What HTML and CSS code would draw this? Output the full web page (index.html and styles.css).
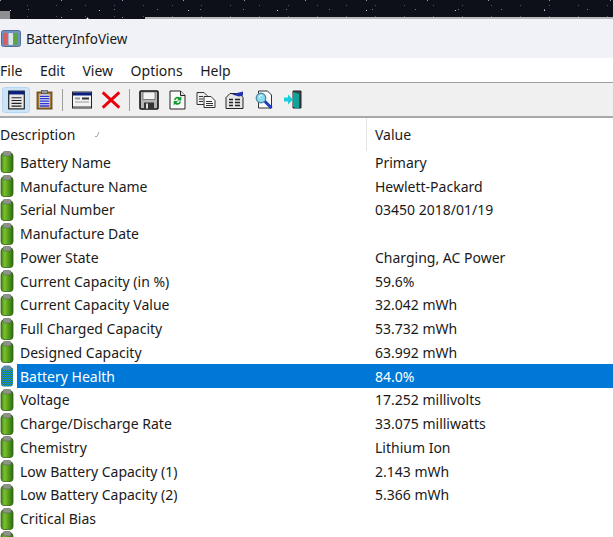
FILE: index.html
```html
<!DOCTYPE html>
<html lang="en">
<head>
  <meta charset="UTF-8">
  <title>BatteryInfoView</title>
  <link rel="stylesheet" href="styles.css">
</head>
<body>
  <svg class="defs" width="0" height="0">
    <defs>
      <linearGradient id="green" x1="0" x2="1" y1="0" y2="0">
        <stop offset="0" stop-color="#3f8214"/>
        <stop offset="0.3" stop-color="#7cc02e"/>
        <stop offset="0.65" stop-color="#4f9a1a"/>
        <stop offset="1" stop-color="#2f6a0e"/>
      </linearGradient>
      <pattern id="dither" width="2" height="2" patternUnits="userSpaceOnUse">
        <rect width="2" height="2" fill="#3f9a5a"/>
        <rect width="1" height="1" fill="#0078d7"/>
        <rect x="1" y="1" width="1" height="1" fill="#0078d7"/>
      </pattern>
      <symbol id="battery" viewBox="0 0 14 22">
        <rect x="1" y="2" width="12" height="19.5" rx="3" fill="url(#green)" stroke="#35601a" stroke-width="0.8"/>
        <rect x="3" y="0.5" width="8" height="4.5" rx="1.5" fill="#8c9488" stroke="#5a6456" stroke-width="0.6"/>
      </symbol>
      <symbol id="battery-sel" viewBox="0 0 14 22">
        <rect x="1" y="2" width="12" height="19.5" rx="3" fill="url(#dither)"/>
        <rect x="3" y="0.5" width="8" height="4.5" rx="1.5" fill="#5f8ca8"/>
      </symbol>
    </defs>
  </svg>

  <div class="wallpaper">
    <div class="taskbar-corner"></div>
    <div class="window-edge"></div>
  </div>

  <div class="title-bar">
    <svg class="app-icon" viewBox="0 0 20 18">
      <rect x="0.5" y="0.5" width="19" height="16" rx="2" fill="#6f93c4" stroke="#55708f"/>
      <rect x="2" y="3" width="4.5" height="12" rx="1" fill="#d9605a"/>
      <rect x="7.5" y="3" width="4.5" height="12" rx="1" fill="#dfe3e8"/>
      <rect x="12.5" y="3" width="4.5" height="12" rx="1" fill="#5aa646"/>
    </svg>
    <span>BatteryInfoView</span>
  </div>

  <div class="menu-bar">
    <span>File</span>
    <span>Edit</span>
    <span>View</span>
    <span>Options</span>
    <span>Help</span>
  </div>

  <div class="toolbar">
    <button class="tool active">
      <svg viewBox="0 0 16 18"><rect x="1" y="1" width="14" height="16" fill="#e8e8e8" stroke="#111"/><rect x="1" y="1" width="14" height="3" fill="#0a1f80"/><path d="M3.5 7h9M3.5 9.5h9M3.5 12h9M3.5 14.5h9" stroke="#222"/></svg>
    </button>
    <button class="tool">
      <svg viewBox="0 0 16 19"><rect x="1" y="2" width="14" height="16" fill="#a5772e" stroke="#5b3d12"/><rect x="3" y="4" width="10" height="12.5" fill="#d8dcf5"/><rect x="5" y="0.5" width="6" height="3" fill="#9a9a9a" stroke="#444" stroke-width="0.6"/><path d="M3.5 6h9M3.5 8.3h9M3.5 10.6h9M3.5 12.9h9M3.5 15.2h9" stroke="#2a35c8" stroke-width="1.2"/></svg>
    </button>
    <i class="tool-sep"></i>
    <button class="tool wide">
      <svg viewBox="0 0 20 17"><rect x="0.5" y="0.5" width="19" height="16" fill="#f3f3f3" stroke="#222"/><rect x="1" y="1" width="18" height="3" fill="#0a1f80"/><rect x="3" y="6" width="5" height="2" fill="#999"/><rect x="10" y="6" width="7" height="2" fill="#333"/><path d="M3 10.5h14" stroke="#999"/><path d="M1 15.5h18" stroke="#777" stroke-width="1.5"/></svg>
    </button>
    <button class="tool wide">
      <svg viewBox="0 0 18 17"><path d="M2.5 2.5 15.5 14.5M15.5 2.5 2.5 14.5" stroke="#e8000b" stroke-width="2.6" stroke-linecap="square"/></svg>
    </button>
    <i class="tool-sep"></i>
    <button class="tool wide">
      <svg viewBox="0 0 20 20"><rect x="1" y="1" width="18" height="18" rx="1" fill="#b4b4b4" stroke="#111" stroke-width="1.6"/><rect x="4" y="2" width="12" height="7.5" fill="#f2f2f2" stroke="#444" stroke-width="0.6"/><rect x="5" y="12.5" width="10" height="6.5" fill="#333"/><rect x="7" y="13.5" width="2" height="5" fill="#ddd"/></svg>
    </button>
    <button class="tool">
      <svg viewBox="0 0 17 20"><path d="M1 1h10.5l4.5 4.5V19H1z" fill="#fafafa" stroke="#222"/><path d="M11.5 1v4.5H16" fill="#ddd" stroke="#222"/><path d="M5 10a3.6 3.6 0 0 1 6-2.4L12.3 6v4.6H8l1.5-1.5A2 2 0 0 0 6.5 10z" fill="#119a2d"/><path d="M12 11.5a3.6 3.6 0 0 1-6 2.4L4.7 15.4v-4.5H9l-1.5 1.5a2 2 0 0 0 3 -1z" fill="#119a2d"/></svg>
    </button>
    <button class="tool wide">
      <svg viewBox="0 0 20 17"><path d="M1 1h7l3 3v9H1z" fill="#efefef" stroke="#333"/><path d="M8 5h7l4 4v7H8z" fill="#f7f7f7" stroke="#333"/><path d="M3 5h4M3 7.5h4M3 10h4M10 10h6M10 12h7M10 14h7" stroke="#333"/></svg>
    </button>
    <button class="tool wide">
      <svg viewBox="0 0 20 19"><path d="M1 7 5 3h10l3 4v11H1z" fill="#e6e6e6" stroke="#222"/><path d="M7 4 14 2l4-1v4l-4 1z" fill="#2533a8"/><path d="M4 9h4M10 9h5M4 12h4M10 12h5M4 15h4M10 15h5" stroke="#222" stroke-width="1.3"/></svg>
    </button>
    <button class="tool wide">
      <svg viewBox="0 0 19 20"><path d="M4 1h9l4 4v13H4z" fill="#fafafa" stroke="#333"/><path d="M10 11l7 7" stroke="#1b3bc4" stroke-width="3"/><circle cx="6.5" cy="8" r="4.7" fill="#8fdcf0" stroke="#4a8ea8" stroke-width="1.4"/><path d="M4.5 7.5a2.5 2.5 0 0 1 3-2" stroke="#fff" fill="none"/></svg>
    </button>
    <button class="tool wide">
      <svg viewBox="0 0 20 20"><path d="M10 1h8v17h-8z" fill="#3a4a48" stroke="#222"/><path d="M10 2l6 2v15l-6-2z" fill="#11a39a"/><path d="M1 7.5h4V4.5l5 5-5 5v-3H1z" fill="#18d0dc"/></svg>
    </button>
  </div>

  <div class="list">
    <div class="list-head">
      <div class="col-desc">Description<svg class="sort" viewBox="0 0 6 6"><path d="M1 5.5h2L5 1" stroke="#a8a8a8" fill="none"/></svg></div>
      <div class="col-value">Value</div>
    </div>

    <div class="row"><svg class="batt"><use href="#battery"/></svg><span class="name">Battery Name</span><span class="val">Primary</span></div>
    <div class="row"><svg class="batt"><use href="#battery"/></svg><span class="name">Manufacture Name</span><span class="val">Hewlett-Packard</span></div>
    <div class="row"><svg class="batt"><use href="#battery"/></svg><span class="name">Serial Number</span><span class="val">03450 2018/01/19</span></div>
    <div class="row"><svg class="batt"><use href="#battery"/></svg><span class="name">Manufacture Date</span><span class="val"></span></div>
    <div class="row"><svg class="batt"><use href="#battery"/></svg><span class="name">Power State</span><span class="val">Charging, AC Power</span></div>
    <div class="row"><svg class="batt"><use href="#battery"/></svg><span class="name">Current Capacity (in %)</span><span class="val">59.6%</span></div>
    <div class="row"><svg class="batt"><use href="#battery"/></svg><span class="name">Current Capacity Value</span><span class="val">32.042 mWh</span></div>
    <div class="row"><svg class="batt"><use href="#battery"/></svg><span class="name">Full Charged Capacity</span><span class="val">53.732 mWh</span></div>
    <div class="row"><svg class="batt"><use href="#battery"/></svg><span class="name">Designed Capacity</span><span class="val">63.992 mWh</span></div>
    <div class="row selected"><svg class="batt"><use href="#battery-sel"/></svg><span class="name">Battery Health</span><span class="val">84.0%</span></div>
    <div class="row"><svg class="batt"><use href="#battery"/></svg><span class="name">Voltage</span><span class="val">17.252 millivolts</span></div>
    <div class="row"><svg class="batt"><use href="#battery"/></svg><span class="name">Charge/Discharge Rate</span><span class="val">33.075 milliwatts</span></div>
    <div class="row"><svg class="batt"><use href="#battery"/></svg><span class="name">Chemistry</span><span class="val">Lithium Ion</span></div>
    <div class="row"><svg class="batt"><use href="#battery"/></svg><span class="name">Low Battery Capacity (1)</span><span class="val">2.143 mWh</span></div>
    <div class="row"><svg class="batt"><use href="#battery"/></svg><span class="name">Low Battery Capacity (2)</span><span class="val">5.366 mWh</span></div>
    <div class="row"><svg class="batt"><use href="#battery"/></svg><span class="name">Critical Bias</span><span class="val"></span></div>
    <div class="row"><svg class="batt"><use href="#battery"/></svg><span class="name">Number of charge/discharge cycles</span><span class="val">115</span></div>
  </div>
</body>
</html>
```

FILE: styles.css
```css
* {
  margin: 0;
  padding: 0;
  box-sizing: border-box;
}

html, body {
  height: 537px;
  overflow: hidden;
}

body {
  font-family: "Noto Sans", "Open Sans", sans-serif;
  font-size: 14px;
  color: #1a1a1a;
  background: white;
}

.defs {
  display: block;
  height: 0;
}

.wallpaper {
  height: 19px;
  display: flex;
  align-items: flex-end;
  background-color: #0e1019;
  background-image:
    radial-gradient(circle, #fff 0.7px, transparent 1.2px),
    radial-gradient(circle, #ccd 0.5px, transparent 1px),
    radial-gradient(circle, #99a 0.5px, transparent 1px),
    radial-gradient(circle, #778 0.5px, transparent 1px),
    radial-gradient(circle, #556 0.6px, transparent 1px);
  background-size: 137px 23px, 89px 19px, 61px 17px, 43px 13px, 29px 11px;
  background-position: 19px 7px, 55px 1px, 31px 9px, 7px 3px, 13px 0;
}

.taskbar-corner {
  width: 10px;
  height: 8px;
  background: #8d8f92;
}

.window-edge {
  flex: 1;
  height: 2px;
  margin-left: 135px;
  background: #b9b9b9;
}

.title-bar {
  height: 39px;
  display: flex;
  align-items: center;
  gap: 5px;
  padding-left: 1px;
  background: #f1f2f7;
  font-size: 13.5px;
}

.app-icon {
  width: 20px;
  height: 18px;
}

.menu-bar {
  height: 25px;
  display: flex;
  align-items: center;
  gap: 17.5px;
  background: white;
  border-bottom: 1px solid #a0a0a0;
}

.toolbar {
  height: 35px;
  display: flex;
  align-items: center;
  padding-left: 2px;
  background: #f0f0f0;
  border-bottom: 2px solid #a9a9a9;
}

.tool {
  width: 28px;
  height: 26px;
  display: flex;
  align-items: center;
  justify-content: center;
  background: none;
  border: 1px solid transparent;
  border-radius: 3px;
}

.tool svg {
  width: 19px;
  height: 20px;
}

.tool.wide {
  width: 29px;
}

.tool.wide svg {
  width: 20px;
  height: 20px;
}

.tool.active {
  background: #cce4f7;
  border-color: #b5d7f3;
}

.tool-sep {
  width: 1px;
  height: 22px;
  margin: 0 4px;
  background: #a0a0a0;
}

.list-head {
  height: 32.5px;
  display: grid;
  grid-template-columns: 367px 1fr;
  align-items: stretch;
}

.col-desc {
  display: flex;
  align-items: center;
  border-right: 1px solid #e5e5e5;
}

.col-value {
  display: flex;
  align-items: center;
  padding-left: 8px;
}

.sort {
  width: 6px;
  height: 6px;
  margin-left: 19px;
}

.row {
  height: 23.75px;
  display: grid;
  grid-template-columns: 17px 350px 1fr;
  align-items: center;
}

.batt {
  width: 14px;
  height: 22px;
}

.name {
  padding-left: 3px;
  white-space: nowrap;
}

.val {
  padding-left: 8px;
}

.row.selected .name,
.row.selected .val {
  height: 100%;
  display: flex;
  align-items: center;
  background: #0078d7;
  color: white;
}
```
